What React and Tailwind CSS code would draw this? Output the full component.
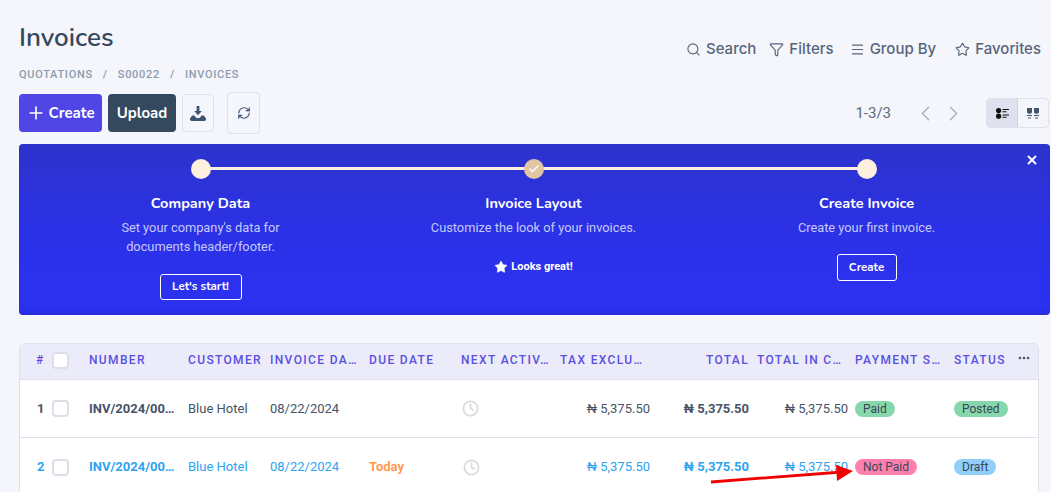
import React from "react";
import { Search, Filter, Menu, Star, ChevronLeft, ChevronRight, RefreshCw, Clock, Plus, X, Check, MoreHorizontal } from "lucide-react";

const columns = "grid grid-cols-[32px_37px_99px_82px_99px_92px_99px_98px_99px_98px_99px_85px]";
const heading = "font-['Nunito','Lato','Noto_Sans',sans-serif]";

function Crumb({ children, sep }) {
  return (
    <>
      <span>{children}</span>
      {sep && <span className="mx-[10px]">/</span>}
    </>
  );
}

function Tool({ icon, label, cls }) {
  return (
    <span className={`flex items-center gap-[5px] ${cls || ""}`}>
      {icon}
      <span>{label}</span>
    </span>
  );
}

function Box() {
  return <span className="block w-[17px] h-[17px] rounded-[4px] bg-white border-2 border-[#dcdfe9]" />;
}

function Step({ done, title, lines, children }) {
  return (
    <div className="flex flex-col items-center text-center relative">
      <div className={`w-5 h-5 rounded-full flex items-center justify-center ${done ? "bg-[#e0c6a2]" : "bg-[#fdf0df]"}`}>
        {done && <Check size={12} strokeWidth={3} className="text-white" />}
      </div>
      <div className={`${heading} mt-[14px] text-[14.5px] leading-5 font-bold text-white`}>{title}</div>
      <div className="mt-[5px] text-[12.8px] leading-[19px] text-[#c6c9fb]">
        {lines.map((l) => <div key={l}>{l}</div>)}
      </div>
      {children}
    </div>
  );
}

function Pill({ cls, children }) {
  return <span className={`inline-flex h-4 items-center rounded-full px-2 text-[12px] text-[#3a4658] ${cls}`}>{children}</span>;
}

function Row({ n, active, due, pay, status, border }) {
  return (
    <div className={`${columns} h-[58px] items-center text-[13px] ${border ? "border-b border-[#dfe1ea]" : ""} ${active ? "text-[#2ea3f2]" : "text-[#465467]"}`}>
      <div className="pl-[17px] font-bold">{n}</div>
      <div><Box /></div>
      <div className="font-bold whitespace-nowrap overflow-hidden">INV/2024/00…</div>
      <div>Blue Hotel</div>
      <div>08/22/2024</div>
      <div className="font-bold text-[#ff9a4d]">{due}</div>
      <div><Clock size={17} strokeWidth={2.5} className={`text-[#dcdcdc] ${active ? "ml-[2px]" : "ml-[1px]"}`} /></div>
      <div className="text-right pr-[8px]">₦ 5,375.50</div>
      <div className="text-right pr-[8px] font-bold">₦ 5,375.50</div>
      <div className="text-right pr-[7px]">₦ 5,375.50</div>
      <div>{pay}</div>
      <div>{status}</div>
    </div>
  );
}

export default function App() {
  const heads = ["NUMBER", "CUSTOMER", "INVOICE DA…", "DUE DATE", "NEXT ACTIV…", "TAX EXCLU…"];
  return (
    <div className="relative w-[1051px] h-[492px] overflow-hidden bg-[#f4f6fb] font-['Roboto',sans-serif] text-[#465467]">
      <div className="flex justify-between pl-[19px] pr-[10px] pt-[22px]">
        <div className={`${heading} text-[26px] leading-8 font-semibold text-[#34495e]`}>Invoices</div>
        <div className="flex gap-[14px] mt-[17px] text-[15px] leading-5 font-medium text-[#56657c] font-['Inter',sans-serif]">
          <Tool icon={<Search size={15} strokeWidth={1.8} />} label="Search" />
          <Tool icon={<Filter size={15} strokeWidth={1.8} />} label="Filters" cls="-ml-[1px]" />
          <Tool icon={<Menu size={15} strokeWidth={1.8} />} label="Group By" cls="ml-[2px]" />
          <Tool icon={<Star size={15} strokeWidth={1.8} />} label="Favorites" cls="ml-[5px]" />
        </div>
      </div>

      <div className="ml-[19px] mt-[8px] text-[11px] leading-4 font-medium tracking-[0.7px] text-[#8d9bb0]">
        <Crumb sep>QUOTATIONS</Crumb><Crumb sep>S00022</Crumb><Crumb>INVOICES</Crumb>
      </div>

      <div className="flex items-center justify-between pl-[19px] pr-[2px] mt-[9px] h-[42px]">
        <div className="flex items-center">
          <button className={`${heading} flex items-center justify-center gap-[2px] w-[83px] h-[38px] rounded-[4px] bg-[#5046e5] text-white font-bold text-[15px]`}>
            <Plus size={20} strokeWidth={2} />Create
          </button>
          <button className={`${heading} ml-[6px] w-[68px] h-[38px] rounded-[4px] bg-[#34495e] text-white font-bold text-[15px]`}>Upload</button>
          <button className="ml-[6px] flex items-center justify-center w-[32px] h-[38px] rounded-[4px] border border-[#dfe1ea]">
            <svg width="16" height="15" viewBox="0 0 16 15" fill="#3d5573">
              <path d="M6.6 0h2.8v5h2.4L8 9.2 4.2 5h2.4z" />
              <path d="M2.2 9.6h2.2L6.4 12h3.2l2-2.4h2.2L16 12.4a2 2 0 0 1-1.6 2.6H1.6A2 2 0 0 1 0 12.4z" />
            </svg>
          </button>
          <button className="ml-[13px] flex items-center justify-center w-[33px] h-[42px] rounded-[4px] border border-[#dfe1ea]">
            <RefreshCw size={14} strokeWidth={2} className="text-[#3d5573]" />
          </button>
        </div>
        <div className="flex items-center">
          <span className="text-[15px] text-[#5a6a80]">1-3/3</span>
          <ChevronLeft size={25} strokeWidth={1.2} className="ml-[22px] text-[#a3aebe]" />
          <ChevronRight size={25} strokeWidth={1.2} className="ml-[3px] text-[#a3aebe]" />
          <div className="ml-[20px] flex h-[30px] w-[63px] rounded-[4px] border border-[#dfe1ea] overflow-hidden">
            <span className="flex-1 flex items-center justify-center bg-[#dee1ee] border-r border-[#cfd3e2]">
              <svg width="13" height="11" viewBox="0 0 13 11" fill="#111">
                <circle cx="2.6" cy="2.6" r="2.6" /><circle cx="2.6" cy="8.2" r="2.6" />
                <path d="M6.5 1h6.5v1H6.5zM6.5 3.2h4v1h-4zM6.5 6.6h6.5v1H6.5zM6.5 8.8h4v1h-4z" />
              </svg>
            </span>
            <span className="flex-1 flex items-center justify-center">
              <svg width="12" height="11" viewBox="0 0 12 11" fill="#45566c">
                <path d="M0 0h5v4a1.8 1.8 0 0 1-1.8 1.8H1.8A1.8 1.8 0 0 1 0 4zM7 0h5v4a1.8 1.8 0 0 1-1.8 1.8H8.8A1.8 1.8 0 0 1 7 4z" />
                <path d="M0 7h5v1H0zM7 7h5v1H7zM1 9.5h3v1H1zM8 9.5h3v1H8z" />
              </svg>
            </span>
          </div>
        </div>
      </div>

      <div className="relative ml-[19px] mr-[1px] mt-[10px] h-[171px] rounded-[4px] pt-[15px] pl-[15px] bg-gradient-to-b from-[#2d33cb] via-[#2b31e6] to-[#2c31f2] shadow-[inset_0_-5px_6px_-4px_rgba(30,30,150,0.4)]">
        <X size={14} strokeWidth={3.2} className="absolute top-[9px] right-[11px] text-white" />
        <div className="absolute left-[181px] right-[184px] top-[23px] h-[3px] bg-[#fdf0df]" />
        <div className="relative grid grid-cols-3 w-[999px]">
          <Step title="Company Data" lines={["Set your company's data for", "documents header/footer."]}>
            <button className={`${heading} mt-[18px] w-[82px] h-[26px] rounded-[3px] border border-white text-white text-[11.5px] font-bold`}>Let's start!</button>
          </Step>
          <Step done title="Invoice Layout" lines={["Customize the look of your invoices."]}>
            <div className="mt-[22px] flex items-center gap-[3px] text-[11px] leading-4 font-bold text-white">
              <Star size={14} fill="currentColor" strokeWidth={1} />Looks great!
            </div>
          </Step>
          <Step title="Create Invoice" lines={["Create your first invoice."]}>
            <button className={`${heading} mt-[17px] w-[60px] h-[27px] rounded-[3px] border border-white text-white text-[11.5px] font-bold`}>Create</button>
          </Step>
        </div>
      </div>

      <div className="ml-[19px] mt-[28px] w-[1020px] rounded-t-[6px] border border-b-0 border-[#dfe1ea] bg-white overflow-hidden">
        <div className={`${columns} h-[36px] pb-[3px] items-center bg-[#ecebfa] border-b border-[#dfe1ea] text-[12px] font-medium tracking-[1.35px] text-[#5a50e0]`}>
          <div className="pl-[16px]">#</div>
          <div><Box /></div>
          {heads.map((h) => <div key={h} className="whitespace-nowrap overflow-hidden">{h}</div>)}
          <div className="text-right pr-[8px]">TOTAL</div>
          <div className="whitespace-nowrap">TOTAL IN C…</div>
          <div className="whitespace-nowrap">PAYMENT S…</div>
          <div className="flex justify-between pr-[8px]">
            <span>STATUS</span>
            <MoreHorizontal size={14} strokeWidth={2.6} className="text-[#4a5568]" />
          </div>
        </div>
        <Row n="1" due="" border pay={<Pill cls="bg-[#86d7ab]">Paid</Pill>} status={<Pill cls="bg-[#86d7ab]">Posted</Pill>} />
        <Row n="2" active due="Today" pay={<Pill cls="bg-[#ff80ac]">Not Paid</Pill>} status={<Pill cls="bg-[#8fcff8]">Draft</Pill>} />
      </div>

      <svg className="absolute left-[708px] top-[460px]" width="150" height="26" viewBox="0 0 150 26">
        <path d="M3 22 L134 12" stroke="#f00000" strokeWidth="2.8" />
        <path d="M128 5 L145 11 L129 21 Z" fill="#f00000" />
      </svg>
    </div>
  );
}
